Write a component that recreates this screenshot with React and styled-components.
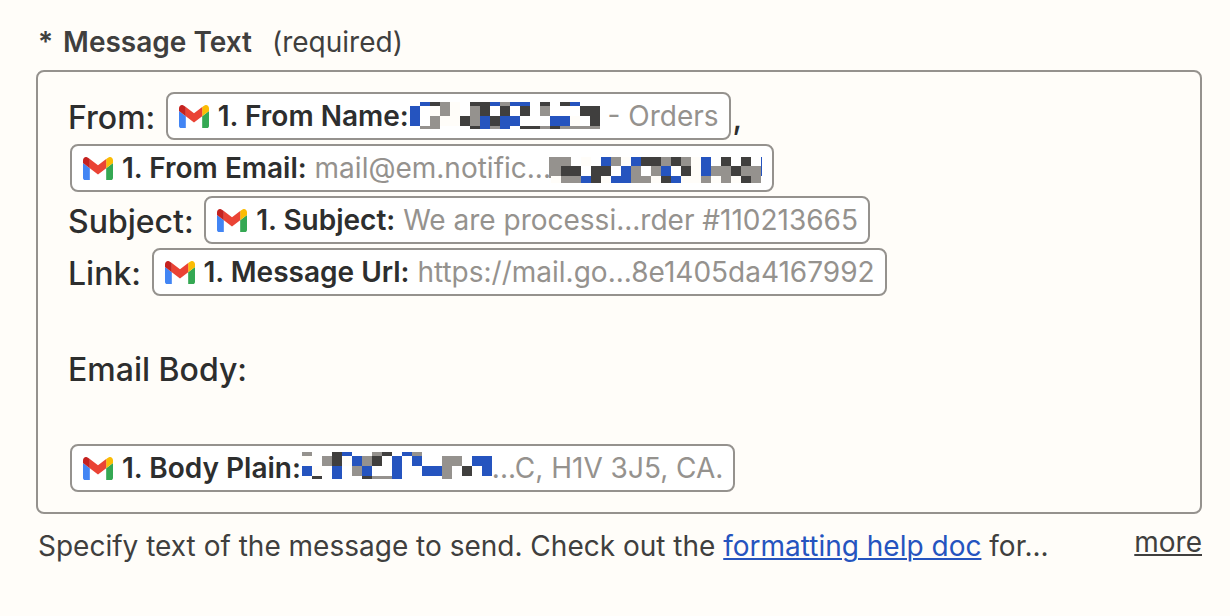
import React from "react";
import styled, { createGlobalStyle } from "styled-components";

const color = {
  page: "#fffdf9",
  ink: "#2d2e2e",
  label: "#403f3e",
  muted: "#95928e",
  blue: "#2554bf",
};

const GlobalStyle = createGlobalStyle`
  *, *::before, *::after { box-sizing: border-box; }
  body {
    margin: 0;
    background: ${color.page};
    color: ${color.label};
    font-family: Inter, "Liberation Sans", sans-serif;
    font-size: 28px;
    line-height: 36px;
  }
`;

const Form = styled.main`
  padding: 24px 28px 36px 36px;
`;

const LabelRow = styled.div`
  display: flex;
  gap: 20px;
  padding-left: 2px;
  margin-bottom: 10px;
`;

const FieldLabel = styled.span`
  display: flex;
  gap: 10px;
  font-weight: 600;
`;

const Editor = styled.div`
  padding: 18px 30px;
  border: 2px solid ${color.muted};
  border-radius: 8px;
  color: ${color.ink};
  font-size: 32px;
  font-weight: 500;
  outline: none;
`;

const Line = styled.div`
  display: flex;
  align-items: center;
  min-height: 48px;
  white-space: pre;
`;

const Typed = styled.span`
  padding-top: 4px;
`;

const Token = styled.span`
  display: inline-flex;
  align-items: center;
  height: 48px;
  margin: 2px;
  padding: 0 10px 0 11px;
  border: 2px solid ${color.muted};
  border-radius: 8px;
  background: #fff;
  font-size: 28px;
`;

const TokenName = styled.span`
  margin-left: 9px;
  font-weight: 600;
`;

const TokenValue = styled.span`
  color: ${color.muted};
  font-weight: 400;
`;

const MosaicSvg = styled.svg`
  flex: none;
  margin-left: ${(p) => p.$gap || 0}px;
`;

const HelpRow = styled.div`
  display: flex;
  justify-content: space-between;
  align-items: flex-start;
  padding: 14px 0 0 2px;
`;

const HelpText = styled.p`
  margin: 0;
`;

const HelpLink = styled.a`
  color: ${color.blue};
  text-decoration: underline;
  text-decoration-thickness: 2px;
  text-underline-offset: 2px;
`;

const MoreButton = styled.button`
  margin: -4px 0 0;
  padding: 0;
  border: 0;
  background: none;
  color: inherit;
  font: inherit;
  text-decoration: underline;
  text-decoration-thickness: 2px;
  text-underline-offset: 2px;
  cursor: pointer;
`;

function GmailIcon() {
  return (
    <svg width="30" height="23" viewBox="52 42 88 66" preserveAspectRatio="none" aria-hidden="true">
      <path fill="#4285f4" d="M58 108h14V74L52 59v43c0 3.32 2.69 6 6 6" />
      <path fill="#34a853" d="M120 108h14c3.32 0 6-2.69 6-6V59l-20 15" />
      <path fill="#fbbc04" d="M120 48v26l20-15v-8c0-7.42-8.47-11.65-14.4-7.2" />
      <path fill="#ea4335" d="M72 74V48l24 18 24-18v26L96 92" />
      <path fill="#c5221f" d="M52 51v8l20 15V48l-5.6-4.2c-5.94-4.45-14.4-.22-14.4 7.2" />
    </svg>
  );
}

const cellFill = { B: color.blue, D: color.label, G: color.muted, c: color.page };

/* Censor block: rows hold a height and one letter per 10px cell, edges are thin bars at either side. */
function Mosaic({ rows, gap, edges = [0, 0] }) {
  const columns = Math.max(...rows.map((row) => row[1].length));
  const height = rows.reduce((sum, row) => sum + row[0], 0);
  const [left, right] = edges;
  const width = left + columns * 10 + right;
  let top = 0;
  return (
    <MosaicSvg
      $gap={gap}
      width={width}
      height={height}
      viewBox={`0 0 ${width} ${height}`}
      shapeRendering="crispEdges"
      role="img"
      aria-label="Hidden"
    >
      {rows.map(([rowHeight, cells], r) => {
        const y = top;
        top += rowHeight;
        return [...cells].map((cell, c) =>
          cellFill[cell] ? (
            <rect key={`${r}-${c}`} x={left + c * 10} y={y} width="10" height={rowHeight} fill={cellFill[cell]} />
          ) : null
        );
      })}
      {left > 0 && <rect x="0" y="4" width={left} height="21" fill={color.muted} />}
      {right > 0 && <rect x={width - right} y="4" width={right} height="19" fill={color.blue} />}
    </MosaicSvg>
  );
}

const nameMosaic = [
  [4, ".BDGc.DDBGBB.D.DB.."],
  [10, "B.cGc.GD.D.D.G...DD"],
  [10, "B.GccDGBDBB...BBc.D"],
  [3, ".GG...DBGB.DDGDGGGG"],
  [1, ""],
];

const emailMosaic = [
  [4, ""],
  [9, "GG.c.BGcBDDGDGcB.D.D."],
  [10, "GDD.DD.BG.GB.DcBGGDGG"],
  [7, "cGGBDcBBGGcDBccGcGcDG"],
];

const bodyMosaic = [
  [4, "G..DB..GD.BG......."],
  [10, "c.GDcBGD.B.B..GG.BB"],
  [10, "Bc.B.GB..B..BBG.D.B"],
  [3, ".D.B..DGGB....G...."],
  [5, ""],
];

function Field({ name, children }) {
  return (
    <Token contentEditable={false}>
      <GmailIcon />
      <TokenName>{name}</TokenName>
      {children}
    </Token>
  );
}

export default function App() {
  return (
    <>
      <GlobalStyle />
      <Form>
        <LabelRow>
          <FieldLabel id="message-label">
            <span>*</span>
            <span>Message Text</span>
          </FieldLabel>
          <span>(required)</span>
        </LabelRow>
        <Editor
          role="textbox"
          aria-multiline="true"
          aria-required="true"
          aria-labelledby="message-label"
          aria-describedby="message-help"
          contentEditable
          suppressContentEditableWarning
          spellCheck={false}
        >
          <Line>
            <Typed>{"From: "}</Typed>
            <Field name="1. From Name:">
              <Mosaic rows={nameMosaic} gap={1} />
              <TokenValue>{" - Orders"}</TokenValue>
            </Field>
            <Typed>,</Typed>
          </Line>
          <Line>
            <Field name="1. From Email:">
              <TokenValue>{" mail@em.notific..."}</TokenValue>
              <Mosaic rows={emailMosaic} gap={-2} edges={[2, 1]} />
            </Field>
          </Line>
          <Line>
            <Typed>{"Subject: "}</Typed>
            <Field name="1. Subject:">
              <TokenValue>{" We are processi...rder #110213665"}</TokenValue>
            </Field>
          </Line>
          <Line>
            <Typed>{"Link: "}</Typed>
            <Field name="1. Message Url:">
              <TokenValue>{" https://mail.go...8e1405da4167992"}</TokenValue>
            </Field>
          </Line>
          <Line />
          <Line>Email Body:</Line>
          <Line />
          <Line>
            <Field name="1. Body Plain:">
              <Mosaic rows={bodyMosaic} gap={1} />
              <TokenValue>...C, H1V 3J5, CA.</TokenValue>
            </Field>
          </Line>
        </Editor>
        <HelpRow>
          <HelpText id="message-help">
            Specify text of the message to send. Check out the{" "}
            <HelpLink href="#formatting">formatting help doc</HelpLink> for...
          </HelpText>
          <MoreButton type="button">more</MoreButton>
        </HelpRow>
      </Form>
    </>
  );
}
